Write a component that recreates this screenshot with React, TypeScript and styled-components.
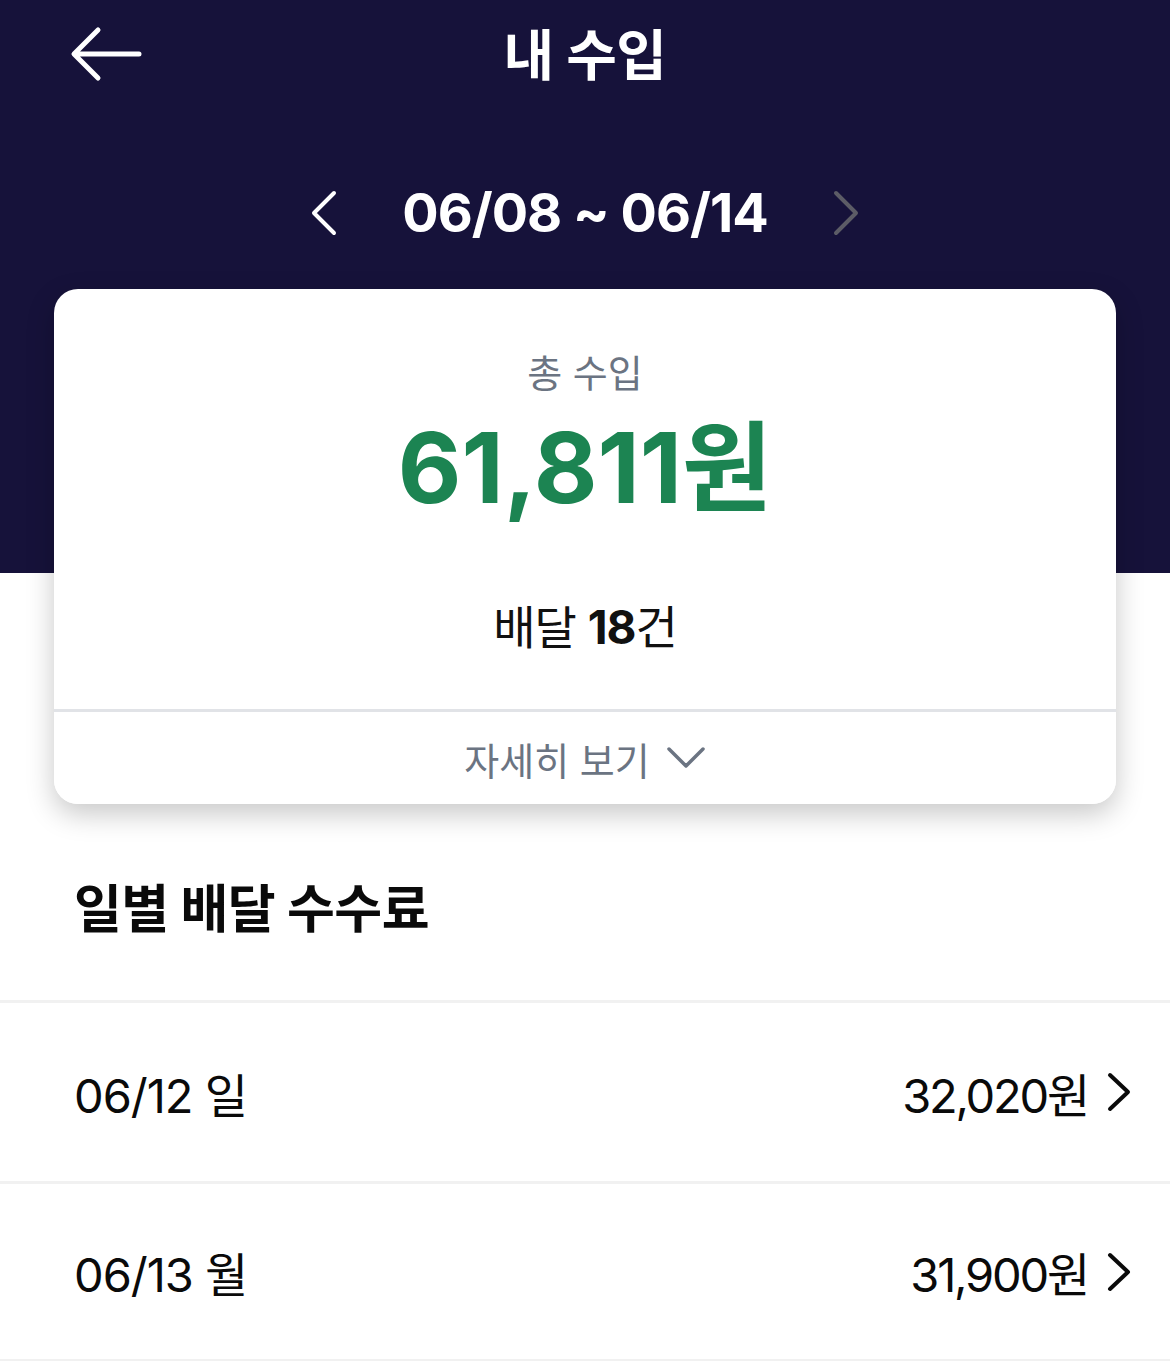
import React from "react";
import styled, { createGlobalStyle } from "styled-components";

const GlobalStyle = createGlobalStyle`
  html, body { margin: 0; padding: 0; background: #ffffff; }
  body {
    font-family: "Inter", "Noto Sans CJK KR", sans-serif;
    -webkit-font-smoothing: antialiased;
  }
  * { box-sizing: border-box; }
`;

const Page = styled.div`
  width: 1170px;
  min-height: 1361px;
  background: #ffffff;
  overflow: hidden;
`;

const Header = styled.header`
  height: 573px;
  background: #16123a;
  color: #ffffff;
  display: flex;
  flex-direction: column;
`;

const TopBar = styled.div`
  height: 110px;
  display: grid;
  grid-template-columns: 1fr auto 1fr;
  align-items: center;
  padding: 0 70px;
`;

const IconButton = styled.button`
  background: none;
  border: 0;
  padding: 0;
  display: flex;
  align-items: center;
  justify-self: start;
  cursor: pointer;
`;

const Title = styled.h1`
  margin: 0;
  font-size: 55px;
  font-weight: 700;
  letter-spacing: -0.5px;
  line-height: 1;
`;

const DateNav = styled.div`
  margin-top: 60px;
  height: 86px;
  display: flex;
  align-items: center;
  justify-content: center;
  gap: 64px;
`;

const DateRange = styled.div`
  font-size: 54px;
  font-weight: 700;
  letter-spacing: -1px;
  line-height: 1;
`;

const Card = styled.section`
  margin: -284px 54px 0;
  background: #ffffff;
  border-radius: 24px;
  box-shadow: 0 10px 28px rgba(0, 0, 0, 0.22);
  overflow: hidden;
  position: relative;
`;

const CardBody = styled.div`
  height: 420px;
  display: flex;
  flex-direction: column;
  align-items: center;
  padding-top: 60px;
`;

const Label = styled.div`
  font-size: 38px;
  line-height: 48px;
  color: #6b7482;
`;

const Amount = styled.div`
  margin-top: 16px;
  font-size: 98px;
  line-height: 110px;
  font-weight: 700;
  color: #1c8452;
  letter-spacing: 0;
`;

const Count = styled.div`
  margin-top: 74px;
  font-size: 46px;
  line-height: 60px;
  color: #111111;
  letter-spacing: -1px;
  b { font-weight: 700; }
`;

const CardFooter = styled.button`
  width: 100%;
  height: 95px;
  border: 0;
  border-top: 3px solid #e1e3e7;
  background: #ffffff;
  display: flex;
  align-items: center;
  justify-content: center;
  gap: 16px;
  font-family: inherit;
  font-size: 38px;
  color: #6b7482;
  padding: 0;
  cursor: pointer;
`;

const SectionTitle = styled.h2`
  margin: 76px 0 0;
  padding: 0 74px 60px;
  font-size: 52px;
  line-height: 60px;
  font-weight: 700;
  color: #0a0a0a;
  letter-spacing: -0.5px;
`;

const List = styled.ul`
  list-style: none;
  margin: 0;
  padding: 0;
`;

const Row = styled.li`
  height: 181px;
  border-top: 3px solid #f1f1f1;
  display: flex;
  align-items: center;
  justify-content: space-between;
  padding: 0 38px 0 74px;
  font-size: 47px;
  color: #0a0a0a;
  letter-spacing: -1px;
  &:last-child { border-bottom: 3px solid #f1f1f1; }
`;

const RowRight = styled.div`
  display: flex;
  align-items: center;
  gap: 18px;
  letter-spacing: -2.2px;
`;

const BackArrow = () => (
  <svg width="72" height="58" viewBox="0 0 72 58" fill="none">
    <path d="M69 28H5M28 4L4 28L28 52" stroke="#fff" strokeWidth="5" strokeLinecap="round" strokeLinejoin="round" />
  </svg>
);

const Chevron = ({ dir, color, w, h, sw }: { dir: "left" | "right"; color: string; w: number; h: number; sw: number }) => (
  <svg width={w + sw * 2} height={h + sw * 2} viewBox={`0 0 ${w + sw * 2} ${h + sw * 2}`} fill="none">
    {dir === "left" ? (
      <path d={`M${w + sw} ${sw}L${sw} ${sw + h / 2}L${w + sw} ${sw + h}`} stroke={color} strokeWidth={sw} strokeLinecap="round" strokeLinejoin="round" />
    ) : (
      <path d={`M${sw} ${sw}L${w + sw} ${sw + h / 2}L${sw} ${sw + h}`} stroke={color} strokeWidth={sw} strokeLinecap="round" strokeLinejoin="round" />
    )}
  </svg>
);

const ChevronDown = () => (
  <svg width="40" height="26" viewBox="0 0 40 26" fill="none">
    <path d="M3 4L20 21L37 4" stroke="#6b7482" strokeWidth="3.5" strokeLinecap="round" strokeLinejoin="round" />
  </svg>
);

const rows = [
  { date: "06/12 일", amount: "32,020원" },
  { date: "06/13 월", amount: "31,900원" },
];

export default function App() {
  return (
    <Page>
      <GlobalStyle />
      <Header>
        <TopBar>
          <IconButton aria-label="뒤로">
            <BackArrow />
          </IconButton>
          <Title>내 수입</Title>
          <div />
        </TopBar>
        <DateNav>
          <Chevron dir="left" color="#ffffff" w={20} h={40} sw={4} />
          <DateRange>06/08 ~ 06/14</DateRange>
          <Chevron dir="right" color="#5c5c66" w={20} h={40} sw={4} />
        </DateNav>
      </Header>
      <Card>
        <CardBody>
          <Label>총 수입</Label>
          <Amount>61,811원</Amount>
          <Count>
            배달 <b>18</b>건
          </Count>
        </CardBody>
        <CardFooter>
          자세히 보기
          <ChevronDown />
        </CardFooter>
      </Card>
      <SectionTitle>일별 배달 수수료</SectionTitle>
      <List>
        {rows.map((r) => (
          <Row key={r.date}>
            <span>{r.date}</span>
            <RowRight>
              <span>{r.amount}</span>
              <Chevron dir="right" color="#0a0a0a" w={18} h={34} sw={4} />
            </RowRight>
          </Row>
        ))}
      </List>
    </Page>
  );
}
